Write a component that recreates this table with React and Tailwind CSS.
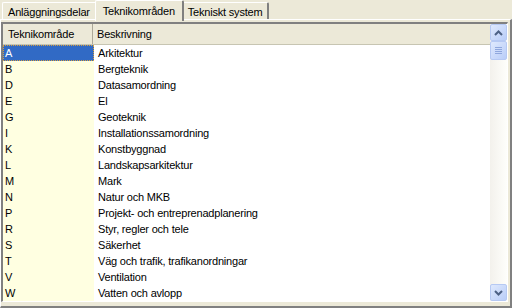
import React from "react";

const rows = [
  ["A", "Arkitektur"],
  ["B", "Bergteknik"],
  ["D", "Datasamordning"],
  ["E", "El"],
  ["G", "Geoteknik"],
  ["I", "Installationssamordning"],
  ["K", "Konstbyggnad"],
  ["L", "Landskapsarkitektur"],
  ["M", "Mark"],
  ["N", "Natur och MKB"],
  ["P", "Projekt- och entreprenadplanering"],
  ["R", "Styr, regler och tele"],
  ["S", "Säkerhet"],
  ["T", "Väg och trafik, trafikanordningar"],
  ["V", "Ventilation"],
  ["W", "Vatten och avlopp"],
];

const tabs = ["Anläggningsdelar", "Teknikområden", "Tekniskt system"];

const Tab = ({ label, active }) => (
  <div
    className={
      active
        ? "relative z-10 -mb-[2px] h-[21px] px-[7px] pt-[2px] bg-[#ece9d8] border-t border-l border-white border-r-2 border-r-[#808080] -mx-[2px] rounded-t-[2px]"
        : "h-[17px] px-[5px] pt-[1px] bg-[#ece9d8] border-t border-l border-white border-r-2 border-r-[#808080] rounded-t-[2px]"
    }
  >
    {label}
  </div>
);

const ScrollButton = ({ dir }) => (
  <div className="w-[17px] h-[17px] rounded-[2px] border border-[#b6c9f3] bg-gradient-to-br from-[#dfe9fd] to-[#b9cdf8] flex items-center justify-center">
    <svg width="9" height="6" viewBox="0 0 9 6">
      <path
        d={dir === "up" ? "M1 5 L4.5 1.5 L8 5" : "M1 1 L4.5 4.5 L8 1"}
        fill="none"
        stroke="#4d6185"
        strokeWidth="2"
      />
    </svg>
  </div>
);

export default function App() {
  return (
    <div
      className="w-[512px] h-[308px] bg-[#ece9d8] text-[11px] tracking-[-0.2px] text-black overflow-hidden"
      style={{ fontFamily: '"Liberation Sans", Arial, sans-serif' }}
    >
      {/* tab strip */}
      <div className="flex pl-[2px] h-[19px] items-end">
        {tabs.map((t) => (
          <Tab key={t} label={t} active={t === "Teknikområden"} />
        ))}
      </div>

      {/* tab page */}
      <div className="h-[289px] border-t border-l border-white border-r-2 border-r-[#808080] border-b-2 border-b-[#808080] pt-[2px] pr-[2px]">
        <div className="h-[280px] border-t-2 border-l-2 border-[#808080] border-b border-r border-b-white border-r-white flex">
          <div className="flex-1 flex flex-col bg-white">
            {/* header */}
            <div className="flex h-[21px] bg-[#ece9d8] leading-[20px] border-b border-[#c7c5b2]">
              <div className="w-[90px] pl-[5px] border-r border-[#aca899]">Teknikområde</div>
              <div className="pl-[4px]">Beskrivning</div>
            </div>
            {rows.map(([code, desc], i) => (
              <div key={code} className="flex h-[16px] leading-[16px]">
                <div
                  className={
                    i === 0
                      ? "w-[91px] pl-[1px] leading-[14px] bg-[#316ac5] text-white border border-dotted border-[#d8a040]"
                      : "w-[91px] pl-[2px] bg-[#ffffe1]"
                  }
                >
                  {code}
                </div>
                <div className="pl-[4px] whitespace-nowrap">{desc}</div>
              </div>
            ))}
          </div>

          {/* vertical scrollbar */}
          <div className="w-[17px] bg-gradient-to-r from-[#f3f1ec] to-[#fefefb] flex flex-col">
            <ScrollButton dir="up" />
            <div className="w-[17px] h-[19px] rounded-[2px] border border-[#b6c9f3] bg-gradient-to-br from-[#dfe9fd] to-[#b9cdf8] flex flex-col items-center justify-center gap-[1px]">
              <div className="w-[7px] h-[1px] bg-[#8fa7dd]" />
              <div className="w-[7px] h-[1px] bg-[#8fa7dd]" />
              <div className="w-[7px] h-[1px] bg-[#8fa7dd]" />
              <div className="w-[7px] h-[1px] bg-[#8fa7dd]" />
            </div>
            <div className="flex-1" />
            <ScrollButton dir="down" />
          </div>
        </div>
      </div>
    </div>
  );
}
